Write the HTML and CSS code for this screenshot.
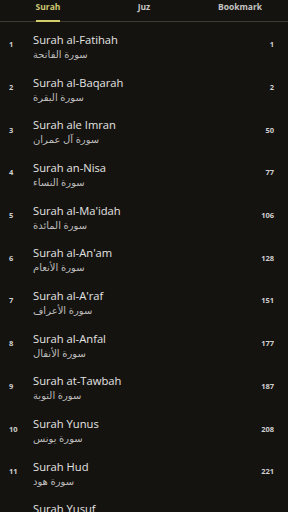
FILE: index.html
```html
<!DOCTYPE html>
<html lang="en">
<head>
  <meta charset="UTF-8">
  <title>Surah</title>
  <link rel="stylesheet" href="styles.css">
</head>
<body>
  <div class="tabs">
    <div class="tab active"><span>Surah</span></div>
    <div class="tab"><span>Juz</span></div>
    <div class="tab"><span>Bookmark</span></div>
  </div>

  <div class="list">
    <div class="row"><div class="num">1</div><div class="names"><div class="title">Surah al-Fatihah</div><div class="arabic">سورة الفاتحة</div></div><div class="page">1</div></div>
    <div class="row"><div class="num">2</div><div class="names"><div class="title">Surah al-Baqarah</div><div class="arabic">سورة البقرة</div></div><div class="page">2</div></div>
    <div class="row"><div class="num">3</div><div class="names"><div class="title">Surah ale Imran</div><div class="arabic">سورة آل عمران</div></div><div class="page">50</div></div>
    <div class="row"><div class="num">4</div><div class="names"><div class="title">Surah an-Nisa</div><div class="arabic">سورة النساء</div></div><div class="page">77</div></div>
    <div class="row"><div class="num">5</div><div class="names"><div class="title">Surah al-Ma'idah</div><div class="arabic">سورة المائدة</div></div><div class="page">106</div></div>
    <div class="row"><div class="num">6</div><div class="names"><div class="title">Surah al-An'am</div><div class="arabic">سورة الأنعام</div></div><div class="page">128</div></div>
    <div class="row"><div class="num">7</div><div class="names"><div class="title">Surah al-A'raf</div><div class="arabic">سورة الأعراف</div></div><div class="page">151</div></div>
    <div class="row"><div class="num">8</div><div class="names"><div class="title">Surah al-Anfal</div><div class="arabic">سورة الأنفال</div></div><div class="page">177</div></div>
    <div class="row"><div class="num">9</div><div class="names"><div class="title">Surah at-Tawbah</div><div class="arabic">سورة التوبة</div></div><div class="page">187</div></div>
    <div class="row"><div class="num">10</div><div class="names"><div class="title">Surah Yunus</div><div class="arabic">سورة يونس</div></div><div class="page">208</div></div>
    <div class="row"><div class="num">11</div><div class="names"><div class="title">Surah Hud</div><div class="arabic">سورة هود</div></div><div class="page">221</div></div>
    <div class="row"><div class="num">12</div><div class="names"><div class="title">Surah Yusuf</div><div class="arabic">سورة يوسف</div></div><div class="page">235</div></div>
  </div>
</body>
</html>
```

FILE: styles.css
```css
body {
  margin: 0;
  background-color: #15130f;
  color: #e2e2e2;
  font-family: "Open Sans", "DejaVu Sans", sans-serif;
  overflow: hidden;
}

.tabs {
  display: flex;
  height: 22px;
  border-bottom: 1px solid #3e3b31;
  box-sizing: border-box;
}

.tab {
  flex: 1;
  display: flex;
  justify-content: center;
  font-size: 8.5px;
  font-weight: 700;
  color: #c4c4c4;
}

.tab span {
  padding-top: 1px;
  height: 20px;
  box-sizing: border-box;
}

.tab.active span {
  color: #cdc776;
  border-bottom: 2px solid #d4cd6c;
  height: 22px;
}

.list {
  padding-top: 1px;
}

.row {
  display: flex;
  align-items: center;
  height: 42.7px;
  padding: 0 14px 0 9px;
}

.num {
  width: 24px;
  font-size: 7.5px;
  font-weight: 700;
  color: #cfcfcf;
}

.names {
  flex: 1;
  padding-top: 4px;
}

.title {
  font-size: 11.2px;
  line-height: 15px;
  color: #e4e4e4;
}

.arabic {
  font-size: 10px;
  line-height: 14px;
  color: #bcbcbc;
  direction: rtl;
  text-align: left;
}

.page {
  font-size: 7.5px;
  font-weight: 700;
  color: #cfcfcf;
  text-align: right;
}
```
